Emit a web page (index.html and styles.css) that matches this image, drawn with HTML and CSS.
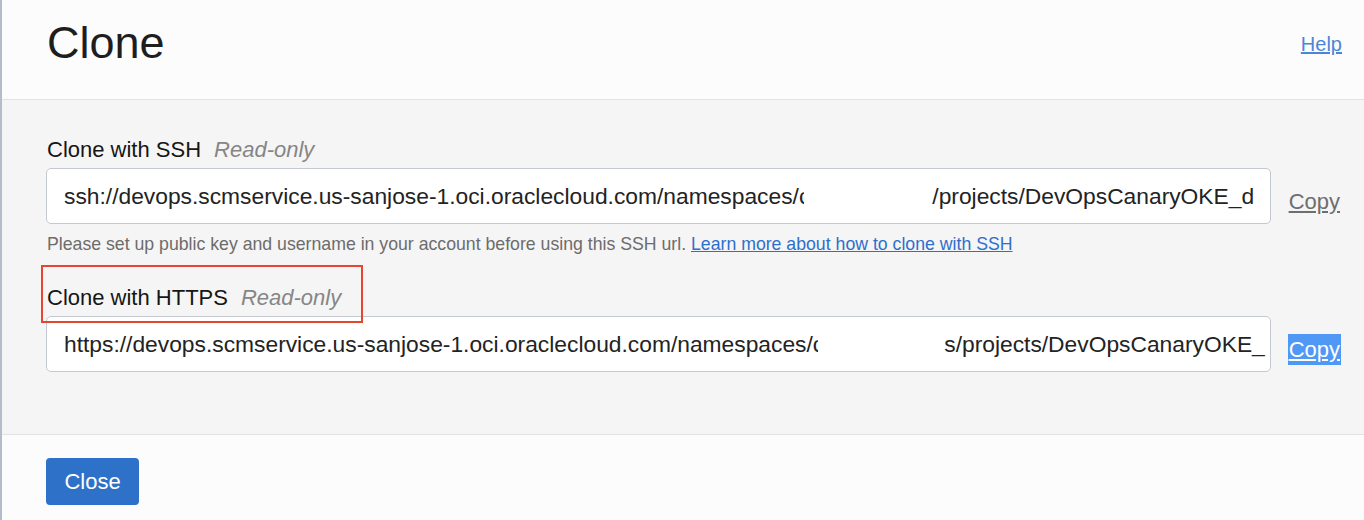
FILE: index.html
```html
<!DOCTYPE html>
<html lang="en">
<head>
<meta charset="utf-8">
<title>Clone</title>
<link rel="stylesheet" href="styles.css">
</head>
<body>
<div class="dialog">
  <header class="dlg-header">
    <h1 class="dlg-title">Clone</h1>
    <a class="help-link" href="#">Help</a>
  </header>
  <main class="dlg-body">
    <section class="field">
      <div class="field-label">Clone with SSH<span class="ro">Read-only</span></div>
      <div class="field-row">
        <div class="url-box"><span>ssh://devops.scmservice.us-sanjose-1.oci.oraclecloud.com/namespaces/c</span><span class="redact redact-1"></span><span>/projects/DevOpsCanaryOKE_d</span></div>
        <a class="copy-link" href="#">Copy</a>
      </div>
      <p class="hint">Please set up public key and username in your account before using this SSH url. <a class="hint-link" href="#">Learn more about how to clone with SSH</a></p>
    </section>
    <section class="field field-https">
      <div class="field-label annotated">Clone with HTTPS<span class="ro">Read-only</span><span class="callout"></span></div>
      <div class="field-row">
        <div class="url-box"><span>https://devops.scmservice.us-sanjose-1.oci.oraclecloud.com/namespaces/c</span><span class="redact redact-2"></span><span>s/projects/DevOpsCanaryOKE_</span></div>
        <a class="copy-link selected" href="#">Copy</a>
      </div>
    </section>
  </main>
  <footer class="dlg-footer">
    <button class="btn-primary" type="button">Close</button>
  </footer>
</div>
</body>
</html>
```

FILE: styles.css
```css
* { box-sizing: border-box; }

html, body {
  margin: 0;
  padding: 0;
  height: 100%;
}

body {
  font-family: "Liberation Sans", Arial, Helvetica, sans-serif;
  color: #1c1c1c;
  background: #fcfcfc;
}

.dialog {
  border-left: 2px solid #b3bccb;
  min-height: 520px;
  display: flex;
  flex-direction: column;
}

.dlg-header {
  height: 100px;
  background: #fcfcfc;
  border-bottom: 1px solid #e2e2e2;
  display: flex;
  justify-content: space-between;
  align-items: flex-start;
  padding: 21px 22px 0 45px;
}

.dlg-title {
  margin: 0;
  font-size: 45px;
  line-height: 44px;
  font-weight: normal;
  color: #1e1e1e;
}

.help-link {
  margin-top: 1px;
  font-size: 20px;
  line-height: 44px;
  color: #4b86d6;
  text-decoration: underline;
}

.dlg-body {
  background: #f5f5f5;
  padding: 37px 22px 62px 44px;
  border-bottom: 1px solid #e2e2e2;
}

.field-label {
  font-size: 22px;
  line-height: 26px;
  color: #161616;
  margin-bottom: 5px;
  padding-left: 1px;
}

.ro {
  margin-left: 13px;
  font-style: italic;
  color: #868686;
}

.field-row {
  display: flex;
  align-items: center;
  gap: 17px;
}

.url-box {
  flex: 1;
  height: 56px;
  background: #fff;
  border: 1px solid #c4c8d0;
  border-radius: 5px;
  padding: 0 17px;
  display: flex;
  align-items: center;
  white-space: nowrap;
  overflow: hidden;
  font-size: 22.8px;
  color: #232323;
}

.redact {
  display: inline-block;
  flex: none;
  height: 20px;
  background: #fff;
  margin-left: -6px;
}

.redact-1 { width: 128px; }
.redact-2 { width: 126px; }

.copy-link {
  font-size: 22px;
  line-height: 31px;
  color: #6e6e6e;
  text-decoration: underline;
  padding: 0 1px;
  margin-right: 1px;
  margin-top: 10px;
}

.copy-link.selected {
  background: #5098f6;
  color: #fff;
}

.hint {
  margin: 10px 0 0 1px;
  font-size: 17.7px;
  line-height: 20px;
  color: #6c6c6c;
}

.hint-link {
  color: #2e6fcb;
  text-decoration: underline;
}

.field-https {
  margin-top: 31px;
}

.annotated {
  position: relative;
}

.callout {
  position: absolute;
  left: -5px;
  top: -20px;
  width: 322px;
  height: 58px;
  border: 2px solid #e64630;
  pointer-events: none;
}

.dlg-footer {
  flex: 1;
  background: #fcfcfc;
  padding: 23px 0 0 44px;
}

.btn-primary {
  height: 47px;
  width: 93px;
  border: none;
  border-radius: 4px;
  background: #2d72c8;
  color: #fff;
  font-family: "Liberation Sans", Arial, Helvetica, sans-serif;
  font-size: 22px;
  padding: 0;
  cursor: pointer;
}
```
